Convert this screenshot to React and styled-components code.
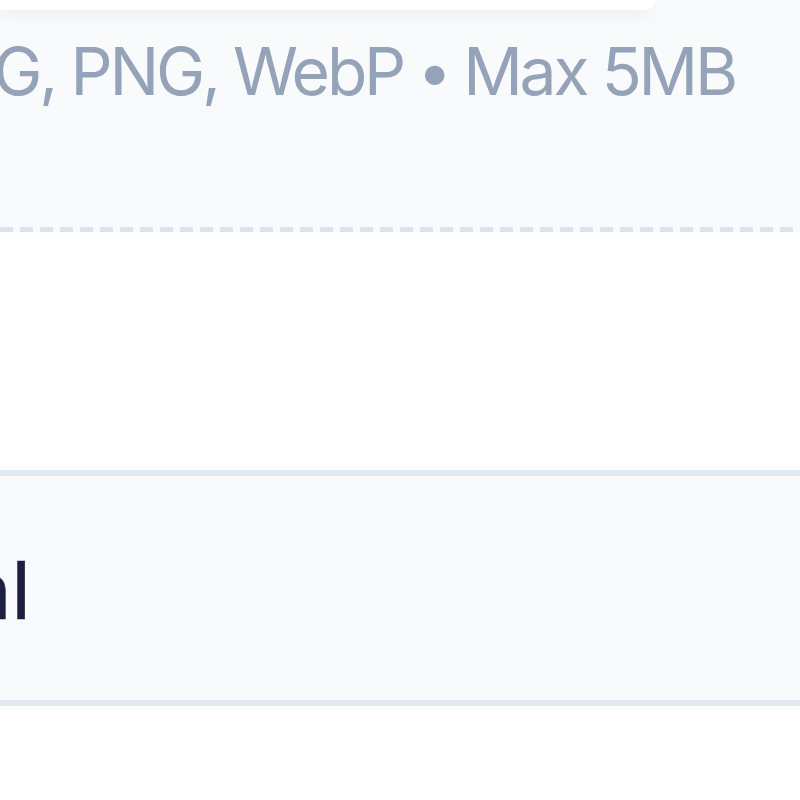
import React from "react";
import styled, { createGlobalStyle } from "styled-components";

const Global = createGlobalStyle`
  html, body { margin: 0; padding: 0; background: #ffffff; }
  body { width: 800px; height: 800px; overflow: hidden; font-family: Inter, "Noto Sans", sans-serif; }
  #root { width: 800px; height: 800px; overflow: hidden; }
`;

const Page = styled.div`
  width: 800px;
  height: 800px;
  display: flex;
  flex-direction: column;
  background: #ffffff;
  overflow: hidden;
`;

const DropZone = styled.div`
  height: 227px;
  background: #f8fafc;
  display: flex;
  flex-direction: column;
`;

const PreviewCard = styled.div`
  width: 655px;
  height: 10px;
  background: #ffffff;
  border-radius: 0 0 28px 0;
  box-shadow: 0 5px 16px rgba(15, 23, 42, 0.06);
`;

const HintRow = styled.div`
  margin-top: 28px;
  padding-right: 65px;
  display: flex;
  justify-content: flex-end;
  overflow: hidden;
`;

const Hint = styled.span`
  font-size: 66px;
  line-height: 66px;
  color: #94a3b8;
  white-space: nowrap;
  letter-spacing: -3.2px;
`;

const Dot = styled.span`
  font-size: 62px;
  position: relative;
  top: -2px;
`;

const Dashes = styled.div`
  height: 5px;
  background: repeating-linear-gradient(
    to right,
    #dbe3ef 0 13px,
    transparent 13px 20px
  );
  background-color: #f8fafc;
`;

const Gap = styled.div`
  height: 238px;
  background: #ffffff;
`;

const Field = styled.div`
  height: 224px;
  background: #f8fafc;
  border-top: 6px solid #e2e8f0;
  border-bottom: 6px solid #e2e8f0;
  display: flex;
  align-items: center;
  overflow: hidden;
`;

const Value = styled.span`
  font-size: 80px;
  line-height: 80px;
  font-weight: 400;
  color: #1c1f3f;
  white-space: nowrap;
  margin-left: ${(p) => p.$offset}px;
  margin-top: 4px;
  -webkit-text-stroke: 0.6px #1c1f3f;
`;

export default function App() {
  return (
    <Page>
      <Global />
      <DropZone>
        <PreviewCard />
        <HintRow>
          <Hint>
            JPG, PNG, WebP<Dot> • </Dot>Max 5MB
          </Hint>
        </HintRow>
      </DropZone>
      <Dashes />
      <Gap />
      <Field>
        <Value $offset={-261}>Original</Value>
      </Field>
    </Page>
  );
}
